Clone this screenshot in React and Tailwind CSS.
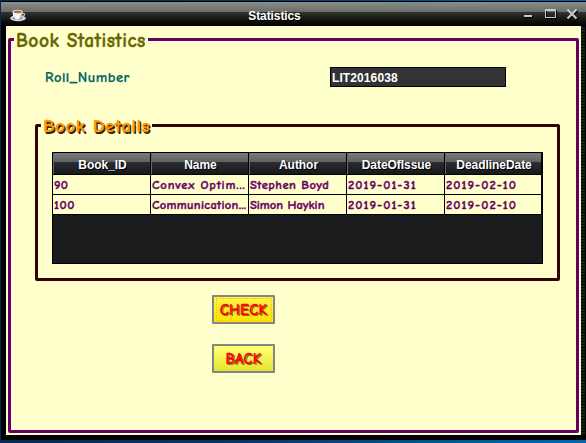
const comic = "font-['Comic_Sans_MS','Comic_Neue',Lato,sans-serif]";

const columns = [
  { name: 'Book_ID', width: 'w-[98px]' },
  { name: 'Name', width: 'w-[98px]' },
  { name: 'Author', width: 'w-[98px]' },
  { name: 'DateOfIssue', width: 'w-[98px]' },
  { name: 'DeadlineDate', width: 'w-[97px]' },
];

const rows = [
  [
    { text: '90', spacing: 'tracking-[0.1px]' },
    { text: 'Convex Optim...', spacing: 'tracking-[0.85px]' },
    { text: 'Stephen Boyd', spacing: 'tracking-[0.5px]' },
    { text: '2019-01-31', spacing: 'tracking-[1.05px]' },
    { text: '2019-02-10', spacing: 'tracking-[1.05px]' },
  ],
  [
    { text: '100', spacing: 'tracking-[0.6px]' },
    { text: 'Communication...', spacing: 'tracking-[0.3px]' },
    { text: 'Simon Haykin', spacing: 'tracking-[0px]' },
    { text: '2019-01-31', spacing: 'tracking-[1.05px]' },
    { text: '2019-02-10', spacing: 'tracking-[1.05px]' },
  ],
];

function JavaCup() {
  return (
    <svg className="mt-[2px] ml-[9px] h-[13px] w-4 shrink-0" viewBox="0 0 16 13">
      <ellipse cx="8" cy="9.2" rx="7.7" ry="3" fill="#d9dadd" />
      <ellipse cx="7.5" cy="9" rx="5" ry="1.6" fill="#77777c" />
      <path d="M12 4.5h1.7c1.6 0 1.2 3-2.2 3" fill="none" stroke="#c9c9ce" strokeWidth="1.1" />
      <path d="M2.7 3c0 4 1.2 7.5 4.8 7.5S12.5 7 12.5 3z" fill="#f5f5f7" />
      <path d="M8.5 10.2c3-.5 4-3.8 4-7.2H11c0 3-.8 6-2.5 7.2z" fill="#aeb0b8" />
      <ellipse cx="7.6" cy="2.8" rx="4.9" ry="2" fill="#fff" />
      <ellipse cx="7.6" cy="2.9" rx="4" ry="1.4" fill="#a9703a" />
    </svg>
  );
}

function WindowControls() {
  return (
    <svg className="mr-[8px] h-6 w-[56px] shrink-0" viewBox="0 0 56 24" shapeRendering="crispEdges">
      <path d="M3 14h8v2H3z" fill="#000" />
      <path d="M2 13h8v2H2z" fill="#c8c8c8" />
      <path d="M24.5 8.5h10v8h-10z" fill="none" stroke="#000" />
      <path d="M23.5 7.5h10v8h-10z" fill="none" stroke="#c8c8c8" />
      <path d="M23 7h11v2H23z" fill="#c8c8c8" />
      <g shapeRendering="auto" fill="none" strokeWidth="2.2">
        <path d="M46.5 8.5l9 9M55.5 8.5l-9 9" stroke="#000" />
        <path d="M45.5 7.5l9 9M54.5 7.5l-9 9" stroke="#c8c8c8" />
      </g>
    </svg>
  );
}

function TitleBar() {
  return (
    <header className="flex h-6 items-start bg-[linear-gradient(to_bottom,#8b8d88_0px,#6a6c68_10px,#333630_10px,#22241f_14px,#080908_21px,#000_24px)]">
      <div className="flex h-6 w-[34px] items-center"><JavaCup /></div>
      <h1 className="flex-1 pt-[6px] text-center text-[12px] leading-4 font-bold tracking-[-0.1px] text-white [text-shadow:1px_1px_0_#000]">
        Statistics
      </h1>
      <div className="flex w-[72px] justify-end"><WindowControls /></div>
    </header>
  );
}

function BookTable() {
  return (
    <div className="mt-4 ml-[14px] h-[112px] w-[491px] border border-black bg-[#1b1c1d]">
      <div className="flex h-[22px] border-b border-black">
        {columns.map((col) => (
          <div
            key={col.name}
            className={`${col.width} shrink-0 border-r border-l border-r-black border-l-[#686868] bg-[linear-gradient(to_bottom,#7b7c7e_0px,#606163_9px,#2b2e31_9px,#17191b_21px)] pt-[4px] pl-px text-center text-[12px] leading-4 font-bold tracking-[-0.05px] text-white [text-shadow:1px_1px_0_#000]`}
          >
            {col.name}
          </div>
        ))}
      </div>
      {rows.map((row, i) => (
        <div key={i} className="flex h-5 border-b border-black">
          {row.map((cell, j) => (
            <div
              key={j}
              className={`${columns[j].width} ${cell.spacing} ${comic} shrink-0 overflow-hidden border-r border-black bg-[#ffffcc] pt-px pl-px text-[12.5px] leading-[19px] font-black whitespace-nowrap text-[#660066] [-webkit-text-stroke:0.4px_#660066]`}
            >
              {cell.text}
            </div>
          ))}
        </div>
      ))}
    </div>
  );
}

const buttonBase = `${comic} flex h-[29px] w-[63px] items-center justify-center rounded-[1px] border-2 border-[#858585] pt-px text-[15px] leading-none font-black tracking-[0.3px] text-[#ff0000] [-webkit-text-stroke:0.3px_#ff0000] [text-shadow:1.3px_1.3px_0_#74742a]`;

export default function App() {
  return (
    <div className="h-[443px] w-[586px] overflow-hidden bg-[linear-gradient(to_right,#002c55,#00376c_40%,#0066b8)] pt-px pl-px font-['Liberation_Sans',Arial,sans-serif]">
      <div className="h-[439px] bg-black pt-px">
        <TitleBar />
        <div className="flex h-[409px] bg-[repeating-linear-gradient(to_bottom,#000_0px,#000_1px,#1c1f20_1px,#1c1f20_3px)]">
          <div className="w-[5px] shrink-0 bg-black" />
          <main className="w-[575px] shrink-0 bg-[#ffffcc] pt-px pl-[2px]">
            <fieldset className="h-[406px] w-[571px] rounded-[2px] border-[3px] border-[#660066]">
              <legend className={`${comic} ml-[3px] h-[25px] w-[134px] pl-[2px] text-[19.5px] leading-[27px] font-black tracking-[0.45px] whitespace-nowrap text-[#666600] [-webkit-text-stroke:0.4px_#666600]`}>
                Book Statistics
              </legend>
              <div className="flex pt-[15px] pl-[34px]">
                <label htmlFor="roll" className={`${comic} h-5 w-[285px] text-[14.5px] leading-[21px] font-bold tracking-[0.5px] text-[#006666] [-webkit-text-stroke:0.25px_#006666]`}>
                  Roll_Number
                </label>
                <input
                  id="roll"
                  readOnly
                  value="LIT2016038"
                  className="h-5 w-[176px] border border-black bg-[#333333] pt-[2px] pl-px text-[12px] font-bold tracking-[0.1px] text-white"
                />
              </div>
              <fieldset className="mt-7 ml-[24px] h-[166px] w-[525px] rounded-[2px] border-[3px] border-[#330000]">
                <legend className={`${comic} ml-[3px] h-[21px] w-[111px] pl-[2px] text-[19px] leading-[23px] font-black tracking-[0.5px] whitespace-nowrap text-[#ff9900] [-webkit-text-stroke:0.3px_#ff9900] [text-shadow:1px_1px_0_#332200,1.5px_1.5px_0_#332200]`}>
                  Book Details
                </legend>
                <BookTable />
              </fieldset>
              <div className="mt-[14px] ml-[201px] flex flex-col gap-5">
                <button className={`${buttonBase} bg-[linear-gradient(to_bottom,#fff34a,#ffe500)]`}>
                  <span className="-mt-px flex h-[23px] w-[56px] shrink-0 items-center justify-center border border-dotted border-[#ffbb00] pt-[2px]">CHECK</span>
                </button>
                <button className={`${buttonBase} bg-[linear-gradient(to_bottom,#ffff78,#e5e52e)]`}>BACK</button>
              </div>
            </fieldset>
          </main>
          <div className="ml-[4px] flex-1 bg-black" />
        </div>
      </div>
    </div>
  );
}
